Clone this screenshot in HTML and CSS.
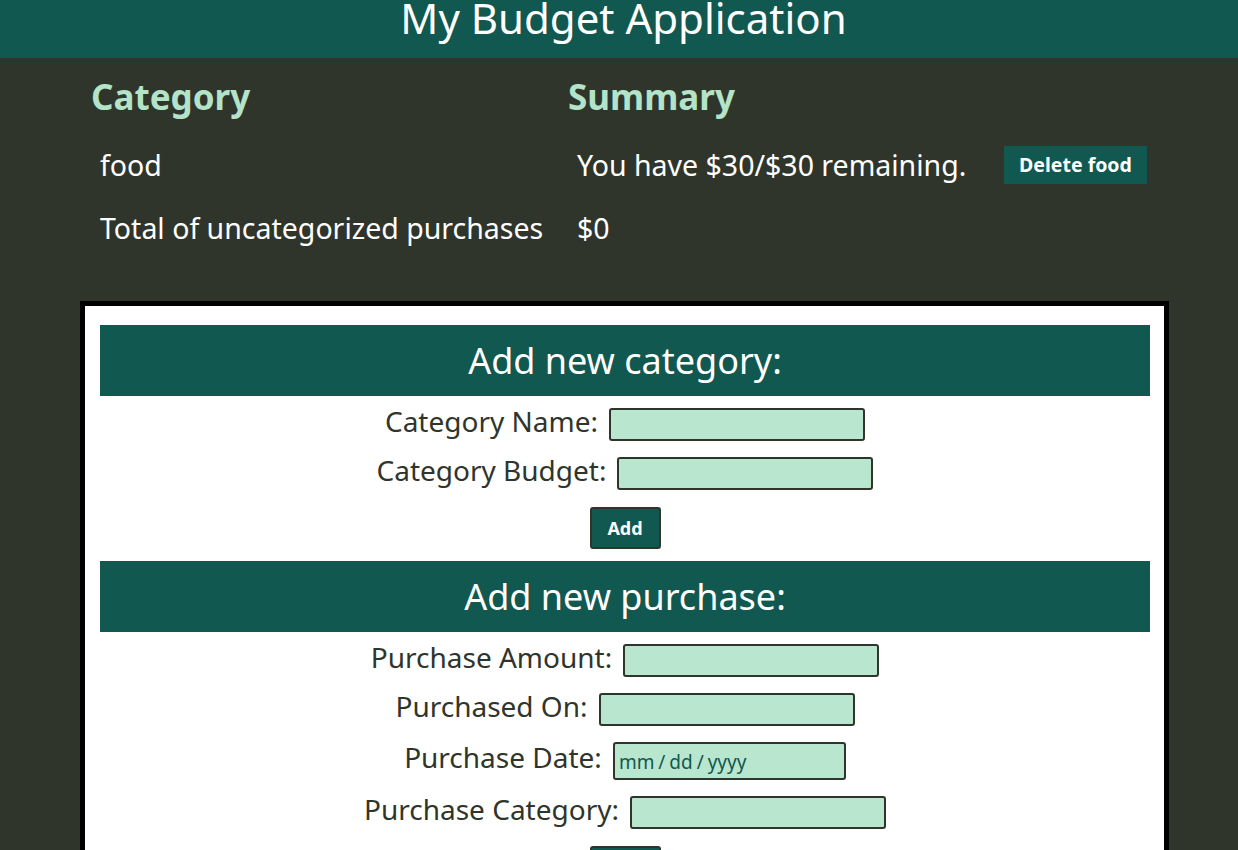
FILE: index.html
```html
<!DOCTYPE html>
<html lang="en">
<head>
<meta charset="utf-8">
<title>My Budget Application</title>
<link rel="stylesheet" href="styles.css">
</head>
<body>
<header class="app-header"><h1>My Budget Application</h1></header>
<main>
  <div class="summary">
    <div class="th">Category</div>
    <div class="th">Summary</div>
    <div class="th"></div>
    <div class="td">food</div>
    <div class="td">You have $30/$30 remaining.</div>
    <div class="td td-btn"><button class="btn-delete">Delete food</button></div>
    <div class="td">Total of uncategorized purchases</div>
    <div class="td">$0</div>
    <div class="td td-btn"></div>
  </div>

  <div class="panel">
    <h2 class="section-title">Add new category:</h2>
    <form class="form">
      <div class="row"><label class="label" for="cname">Category Name:</label><input class="input" id="cname" type="text"></div>
      <div class="row"><label class="label" for="cbudget">Category Budget:</label><input class="input" id="cbudget" type="text"></div>
      <button class="btn-add" type="button">Add</button>
    </form>
    <h2 class="section-title">Add new purchase:</h2>
    <form class="form">
      <div class="row"><label class="label" for="pamount">Purchase Amount:</label><input class="input" id="pamount" type="text"></div>
      <div class="row"><label class="label" for="pon">Purchased On:</label><input class="input" id="pon" type="text"></div>
      <div class="row row-date"><label class="label label-date" for="pdate">Purchase Date:</label><input class="input input-date" id="pdate" type="text" placeholder="mm / dd / yyyy"></div>
      <div class="row"><label class="label" for="pcat">Purchase Category:</label><input class="input" id="pcat" type="text"></div>
      <button class="btn-add" type="button">Add</button>
    </form>
  </div>
</main>
</body>
</html>
```

FILE: styles.css
```css
html, body {
  margin: 0;
  background: #2f352b;
  font-family: "Noto Sans", "DejaVu Sans", sans-serif;
}

.app-header {
  background: #115851;
  height: 58px;
}

.app-header h1 {
  margin: 0;
  padding-left: 9px;
  text-align: center;
  color: #ffffff;
  font-weight: normal;
  font-size: 42px;
  line-height: 36px;
}

.summary {
  display: grid;
  grid-template-columns: 477px 436px auto;
  margin: 17px 0 0 91px;
}

.th {
  color: #b3e3c8;
  font-weight: bold;
  font-size: 35px;
  line-height: 44px;
  padding-bottom: 14px;
}

.td {
  color: #ffffff;
  font-size: 28.5px;
  line-height: 38px;
  padding: 12.5px 0 12.5px 9px;
  white-space: nowrap;
}

.td-btn {
  padding-left: 0;
}

.btn-delete {
  display: block;
  width: 143px;
  height: 38px;
  padding: 0;
  border: 0;
  background: #115851;
  color: #ffffff;
  font-family: inherit;
  font-weight: bold;
  font-size: 19.5px;
}

.panel {
  margin: 42px 0 0 80px;
  width: 1089px;
  box-sizing: border-box;
  border: 5px solid #000000;
  background: #ffffff;
  padding: 19px 14px 0 15px;
  min-height: 560px;
}

.section-title {
  margin: 0;
  height: 71px;
  background: #115851;
  color: #ffffff;
  font-weight: normal;
  font-size: 36px;
  line-height: 71px;
  text-align: center;
}

.form {
  display: flex;
  flex-direction: column;
  align-items: center;
  gap: 8px;
  padding: 8px 0 12px;
  margin: 0;
}

.row {
  display: flex;
  align-items: center;
  gap: 11px;
  height: 41px;
}

.row-date {
  height: 46px;
}

.label {
  font-size: 28px;
  line-height: 38px;
  color: #2f352b;
  margin-bottom: 7px;
}

.label-date {
  margin-bottom: 9px;
}

.input {
  width: 256px;
  height: 33px;
  box-sizing: border-box;
  border: 2px solid #2f352b;
  border-radius: 3px;
  background: #b8e6cf;
  padding: 0 4px;
  font-family: inherit;
  font-size: 18px;
  outline: none;
}

.input-date {
  width: 233px;
  height: 38px;
  font-size: 19px;
  word-spacing: -1px;
  padding-top: 2px;
}

.input-date::placeholder {
  color: #115851;
  opacity: 1;
}

.btn-add {
  margin-top: 5px;
  width: 71px;
  height: 42px;
  box-sizing: border-box;
  border: 2px solid #2f352b;
  border-radius: 3px;
  background: #115851;
  color: #ffffff;
  font-family: inherit;
  font-weight: bold;
  font-size: 18px;
  padding: 0;
}
```
